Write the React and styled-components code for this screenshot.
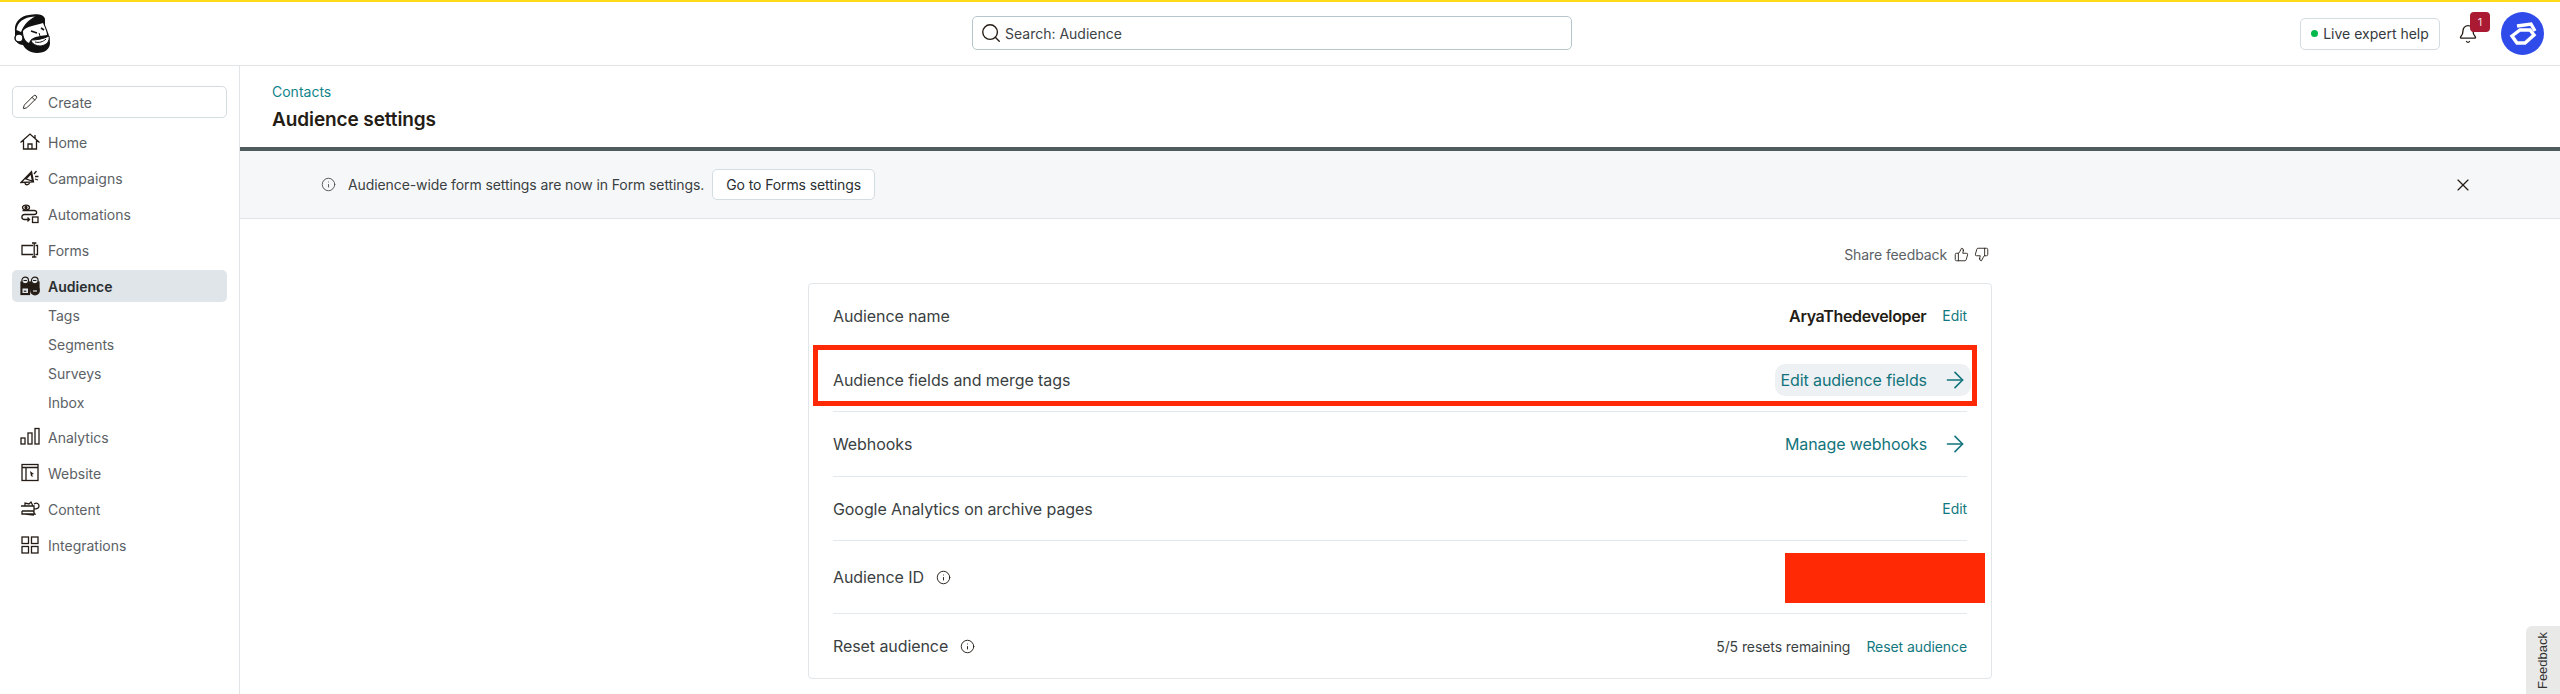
import React from 'react'
import styled, { createGlobalStyle } from 'styled-components'
import { Search, X, ArrowRight, Bell, Pencil, Info, ThumbsUp, ThumbsDown } from 'lucide-react'

const GlobalStyle = createGlobalStyle`
  html, body {
    margin: 0;
    height: 100%;
    background: #fff;
    overflow: hidden;
  }
  body {
    font-family: Inter, "Liberation Sans", sans-serif;
    color: #241c15;
  }
  * {
    box-sizing: border-box;
  }
`

const Page = styled.div`
  position: relative;
  width: 2560px;
  height: 694px;
  overflow: hidden;
  border-top: 2px solid #ffdb17;
  display: flex;
  flex-direction: column;
`

const TopBar = styled.header`
  height: 64px;
  flex: none;
  border-bottom: 1px solid #e2e5e7;
  display: flex;
  align-items: center;
  padding: 0 16px 0 14px;
`

const LogoSlot = styled.div`
  width: 36px;
  height: 40px;
  flex: none;
`

const SearchBox = styled.div`
  width: 600px;
  height: 34px;
  margin: -1px 0 0 922px;
  border: 1px solid #b7c6cd;
  border-radius: 5px;
  display: flex;
  align-items: center;
  gap: 3px;
  padding-left: 7px;
  font-size: 14px;
  color: #3d4346;
`

const TopRight = styled.div`
  margin-left: auto;
  display: flex;
  align-items: center;
`

const HelpButton = styled.div`
  width: 140px;
  height: 32px;
  border: 1px solid #d3dce1;
  border-radius: 5px;
  display: flex;
  align-items: center;
  justify-content: center;
  gap: 5px;
  font-size: 14px;
  color: #343a3d;
`

const GreenDot = styled.span`
  width: 7px;
  height: 7px;
  border-radius: 50%;
  background: #00b84c;
`

const BellWrap = styled.div`
  position: relative;
  width: 20px;
  height: 20px;
  margin: 0 23px 0 18px;
`

const Badge = styled.span`
  position: absolute;
  top: -12px;
  left: 12px;
  width: 20px;
  height: 20px;
  border-radius: 4px;
  background: #ab1a33;
  color: #f6dfe3;
  font-size: 11px;
  display: flex;
  align-items: center;
  justify-content: center;
`

const Avatar = styled.div`
  width: 43px;
  height: 43px;
  border-radius: 50%;
  background: #2f4bea;
  display: flex;
`

const Body = styled.div`
  flex: 1;
  display: flex;
  min-height: 0;
`

const Sidebar = styled.aside`
  width: 240px;
  flex: none;
  border-right: 1px solid #e2e5e7;
  padding: 20px 12px 0;
`

const CreateButton = styled.div`
  height: 32px;
  border: 1px solid #d3dce1;
  border-radius: 5px;
  display: flex;
  align-items: center;
  gap: 10px;
  padding-left: 9px;
  font-size: 14px;
  color: #5b6165;
  margin-bottom: 6px;
`

const NavItem = styled.div`
  height: ${p => (p.$active ? '32px' : '36px')};
  margin: ${p => (p.$active ? '2px 0 0' : '0')};
  display: flex;
  align-items: center;
  gap: 8px;
  padding-left: 8px;
  border-radius: 5px;
  font-size: 14px;
  background: ${p => (p.$active ? '#dfe5e9' : 'transparent')};
  color: ${p => (p.$active ? '#2b2f31' : '#5b6165')};
  font-weight: ${p => (p.$active ? 600 : 400)};
`

const SubList = styled.div`
  padding-bottom: 2px;
`

const SubItem = styled.div`
  height: 29px;
  margin-top: ${p => (p.$first ? '-1px' : '0')};
  display: flex;
  align-items: center;
  padding-left: 36px;
  font-size: 14px;
  color: #5b6165;
`

const IconSvg = styled.svg`
  width: 20px;
  height: 20px;
  flex: none;
  fill: none;
  stroke: #241c15;
  stroke-width: 1.3;
`

const Main = styled.main`
  flex: 1;
  min-width: 0;
  display: flex;
  flex-direction: column;
`

const PageHead = styled.div`
  height: 81px;
  flex: none;
  padding: 17px 32px 0;
`

const Crumb = styled.a`
  display: block;
  font-size: 14px;
  line-height: 18px;
  color: #12848c;
`

const Title = styled.h1`
  margin: 6px 0 0;
  font-size: 19px;
  line-height: 26px;
  font-weight: 600;
  letter-spacing: -0.1px;
  color: #241c15;
`

const Banner = styled.div`
  height: 72px;
  flex: none;
  border-top: 4px solid #505b60;
  border-bottom: 1px solid #e2e5e7;
  background: #f6f7f9;
  display: flex;
  align-items: center;
  padding: 0 87px 0 81px;
  font-size: 14px;
  letter-spacing: -0.1px;
  color: #3a3f42;
`

const BannerText = styled.span`
  margin-left: 12px;
`

const GhostButton = styled.div`
  margin-left: 8px;
  height: 31px;
  padding: 0 13px;
  border: 1px solid #d3dce1;
  border-radius: 5px;
  background: #fff;
  display: flex;
  align-items: center;
  color: #2b2f31;
`

const CloseSlot = styled.div`
  margin-left: auto;
  display: flex;
`

const Content = styled.div`
  width: 1184px;
  margin-left: 568px;
`

const FeedbackRow = styled.div`
  height: 64px;
  padding: 26px 3px 0 0;
  display: flex;
  justify-content: flex-end;
  align-items: flex-start;
  gap: 7px;
  font-size: 14px;
  line-height: 20px;
  letter-spacing: -0.1px;
  color: #5b6165;
`

const Thumbs = styled.span`
  display: flex;
  gap: 5px;
  padding-top: 2px;
`

const Card = styled.section`
  height: 396px;
  border: 1px solid #e2e6e9;
  border-radius: 4px;
  padding: 0 24px;
`

const Row = styled.div`
  position: relative;
  height: ${p => p.$h}px;
  display: flex;
  align-items: center;
  justify-content: space-between;
  border-bottom: ${p => (p.$last ? 'none' : '1px solid #e2e8eb')};
  font-size: 16px;
  letter-spacing: -0.08px;
  color: #3a3f42;
`

const Label = styled.span`
  display: flex;
  align-items: center;
  gap: 12px;
`

const RightGroup = styled.div`
  display: flex;
  align-items: center;
  gap: 16px;
`

const NameValue = styled.span`
  font-weight: 600;
  letter-spacing: -0.35px;
  color: #241c15;
`

const SmallLink = styled.a`
  font-size: 14px;
  color: #12787f;
`

const Note = styled.span`
  font-size: 14px;
  color: #3a3f42;
`

const ArrowLink = styled.a`
  display: flex;
  align-items: center;
  gap: 15px;
  height: 32px;
  margin-right: -4px;
  padding: 0 3px 0 ${p => (p.$hover ? '5px' : '0')};
  border-radius: 10px;
  background: ${p => (p.$hover ? '#eef1f4' : 'transparent')};
  color: #12747b;
`

const Highlight = styled.div`
  position: absolute;
  left: -20px;
  right: -10px;
  top: -3px;
  bottom: 5px;
  border: 5px solid #ff2a05;
  pointer-events: none;
`

const Redaction = styled.div`
  position: absolute;
  top: 12px;
  right: -18px;
  width: 200px;
  height: 50px;
  background: #ff2a05;
`

const FeedbackTab = styled.div`
  position: absolute;
  right: 0;
  bottom: 0;
  width: 34px;
  height: 68px;
  border-radius: 6px 0 0 0;
  background: #e9e9e7;
  display: flex;
  align-items: center;
  justify-content: center;
  font-family: "Liberation Sans", Arial, sans-serif;
  font-size: 13px;
  color: #333;
`

const FeedbackLabel = styled.span`
  transform: rotate(-90deg);
  display: block;
`

const Freddie = () => (
  <svg width="36" height="40" viewBox="0 0 36 40">
    <path d="M1 17C0 9 6 2 15 1c7-1.500 15-1 16 4v6c3 7 5 12 5 18 0 6-5 10-13 10-7 0-12-4-14-8-5 0-8-4-8-8z" fill="#111" />
    <path d="M2.500 16C3 9 9 3 21 2.500 15 6 10 10 7 18z" fill="#fff" />
    <path d="M9 17c4-5 11-5 20-8 2 5 4 9 4 12l-7 1c-5 1-9 2-11 7-4-2-6-6-6-12z" fill="#fff" />
    <path d="M17 17l6 2M27 14l3 2" stroke="#111" strokeWidth="1.600" fill="none" />
    <path d="M25 19l1 3" stroke="#111" fill="none" />
    <path d="M17 26c6 0 12-1 18-4 1 5-2 9-8 10-5 0-9-2-10-6z" fill="#fff" stroke="#111" />
    <path d="M21 28c4 1 8 0 11-3" stroke="#111" fill="none" />
    <circle cx="5" cy="24" r="4" fill="#fff" stroke="#111" strokeWidth="1.500" />
  </svg>
)

const BlueMark = () => (
  <svg width="43" height="43" viewBox="0 0 43 43" fill="none" stroke="#fff" strokeWidth="3.400" strokeLinejoin="miter">
    <path d="M16 14l14-2 4 7" />
    <path d="M11 24l8-6h10l4 5-9 8h-8z" />
  </svg>
)

const Home = () => (
  <IconSvg viewBox="0 0 20 20">
    <path d="M.5 10.500L10 2l9.500 8.500M3.500 8.500V17h13V8.500M8 17v-5h4v5M15 6V3" />
  </IconSvg>
)

const Megaphone = () => (
  <IconSvg viewBox="0 0 20 20">
    <path d="M1 14.500L11.500 3.500l2 10.500zM6 11l5-5.500 1.500 7.500z" />
    <path d="M5 14.500c0 3 4 3 4.500 0M14 6l2.500-3M15 8.500h3.500M15 11l3 1" />
  </IconSvg>
)

const Automations = () => (
  <IconSvg viewBox="0 0 20 20">
    <ellipse cx="6" cy="3.500" rx="3.500" ry="2.300" />
    <circle cx="6" cy="3.500" r="1" fill="#241c15" />
    <path d="M2.500 6.500H14c3.500 0 3.500 4 0 4H4.500c-3.500 0-3.500 5 0 5h5M7.500 13.500l2 2-2 2" />
    <rect x="12.500" y="13" width="5.500" height="5.500" />
  </IconSvg>
)

const Forms = () => (
  <IconSvg viewBox="0 0 20 20">
    <path d="M13 5.500H2v9h11M15.500 5.500h2v9h-2M14.200 3v14M12 3h4.400M12 17h4.400" />
  </IconSvg>
)

const AudienceIcon = () => (
  <IconSvg viewBox="0 0 20 20" style={{ strokeWidth: 1.2 }}>
    <rect x="1" y="6" width="8.500" height="12.500" fill="#241c15" />
    <rect x="10.500" y="6" width="8.500" height="7" fill="#241c15" />
    <circle cx="15" cy="14.500" r="4.300" fill="#241c15" />
    <circle cx="5.200" cy="4.500" r="3.300" fill="#dfe5e9" />
    <circle cx="14.800" cy="4.500" r="3.300" fill="#dfe5e9" />
    <path d="M3.500 4.500h3.400M13 4.500h3.400" />
    <rect x="2.500" y="12.500" width="5.500" height="4.500" fill="#dfe5e9" stroke="none" />
    <path d="M3.800 15.200h2.500" />
    <path d="M13 15h4" stroke="#dfe5e9" />
  </IconSvg>
)

const Analytics = () => (
  <IconSvg viewBox="0 0 20 20">
    <rect x="1" y="11" width="4" height="6" />
    <rect x="8" y="6" width="4" height="11" />
    <rect x="15" y="1.500" width="4" height="15.500" />
  </IconSvg>
)

const Website = () => (
  <IconSvg viewBox="0 0 20 20">
    <rect x="2" y="1.500" width="16" height="16" />
    <path d="M2 4.500h16M6 4.500v13" />
    <path d="M10 8l4 3-2 .5 1 2.500-2-1z" fill="#241c15" stroke="none" />
  </IconSvg>
)

const ContentIcon = () => (
  <IconSvg viewBox="0 0 20 20">
    <path d="M1 7h13v5H2M5 7V4l4 1 2-2 2 4M14 5c3-2 5 0 5 2s-2 3-5 3M2 12v3h13l-2-3M5 15l9 1" />
  </IconSvg>
)

const Integrations = () => (
  <IconSvg viewBox="0 0 20 20">
    <rect x="2" y="2" width="6.500" height="6.500" />
    <rect x="11.500" y="2" width="6.500" height="6.500" />
    <rect x="2" y="11.500" width="6.500" height="6.500" />
    <rect x="11.500" y="11.500" width="6.500" height="6.500" />
  </IconSvg>
)

const navTop = [
  { name: 'Home', icon: <Home /> },
  { name: 'Campaigns', icon: <Megaphone /> },
  { name: 'Automations', icon: <Automations /> },
  { name: 'Forms', icon: <Forms /> },
]

const navBottom = [
  { name: 'Analytics', icon: <Analytics /> },
  { name: 'Website', icon: <Website /> },
  { name: 'Content', icon: <ContentIcon /> },
  { name: 'Integrations', icon: <Integrations /> },
]

const subItems = ['Tags', 'Segments', 'Surveys', 'Inbox']

const InfoIcon = ({ color = '#241c15' }) => <Info size={15} strokeWidth={1.5} color={color} />

const RowArrow = () => <ArrowRight size={26} strokeWidth={1.5} />

const App = () => {
  return (
    <Page>
      <GlobalStyle />
      <TopBar>
        <LogoSlot>
          <Freddie />
        </LogoSlot>
        <SearchBox>
          <Search size={22} strokeWidth={1.5} color="#241c15" />
          <span>Search: Audience</span>
        </SearchBox>
        <TopRight>
          <HelpButton>
            <GreenDot />
            Live expert help
          </HelpButton>
          <BellWrap>
            <Bell size={20} strokeWidth={1.6} color="#241c15" />
            <Badge>1</Badge>
          </BellWrap>
          <Avatar>
            <BlueMark />
          </Avatar>
        </TopRight>
      </TopBar>
      <Body>
        <Sidebar>
          <CreateButton>
            <Pencil size={16} strokeWidth={1.4} color="#241c15" />
            Create
          </CreateButton>
          {navTop.map(item => (
            <NavItem key={item.name}>
              {item.icon}
              {item.name}
            </NavItem>
          ))}
          <NavItem $active>
            <AudienceIcon />
            Audience
          </NavItem>
          <SubList>
            {subItems.map((name, i) => (
              <SubItem key={name} $first={i === 0}>{name}</SubItem>
            ))}
          </SubList>
          {navBottom.map(item => (
            <NavItem key={item.name}>
              {item.icon}
              {item.name}
            </NavItem>
          ))}
        </Sidebar>
        <Main>
          <PageHead>
            <Crumb>Contacts</Crumb>
            <Title>Audience settings</Title>
          </PageHead>
          <Banner>
            <InfoIcon color="#4d5356" />
            <BannerText>Audience-wide form settings are now in Form settings.</BannerText>
            <GhostButton>Go to Forms settings</GhostButton>
            <CloseSlot>
              <X size={20} strokeWidth={1.4} color="#241c15" />
            </CloseSlot>
          </Banner>
          <Content>
            <FeedbackRow>
              Share feedback
              <Thumbs>
                <ThumbsUp size={15} strokeWidth={1.4} color="#241c15" />
                <ThumbsDown size={15} strokeWidth={1.4} color="#241c15" />
              </Thumbs>
            </FeedbackRow>
            <Card>
              <Row $h={64}>
                <Label>Audience name</Label>
                <RightGroup>
                  <NameValue>AryaThedeveloper</NameValue>
                  <SmallLink>Edit</SmallLink>
                </RightGroup>
              </Row>
              <Row $h={64}>
                <Label>Audience fields and merge tags</Label>
                <ArrowLink $hover>
                  Edit audience fields
                  <RowArrow />
                </ArrowLink>
                <Highlight />
              </Row>
              <Row $h={65}>
                <Label>Webhooks</Label>
                <ArrowLink>
                  Manage webhooks
                  <RowArrow />
                </ArrowLink>
              </Row>
              <Row $h={64}>
                <Label>Google Analytics on archive pages</Label>
                <SmallLink>Edit</SmallLink>
              </Row>
              <Row $h={73}>
                <Label>
                  Audience ID
                  <InfoIcon />
                </Label>
                <Redaction />
              </Row>
              <Row $h={64} $last>
                <Label>
                  Reset audience
                  <InfoIcon />
                </Label>
                <RightGroup>
                  <Note>5/5 resets remaining</Note>
                  <SmallLink>Reset audience</SmallLink>
                </RightGroup>
              </Row>
            </Card>
          </Content>
        </Main>
      </Body>
      <FeedbackTab>
        <FeedbackLabel>Feedback</FeedbackLabel>
      </FeedbackTab>
    </Page>
  )
}

export default App
